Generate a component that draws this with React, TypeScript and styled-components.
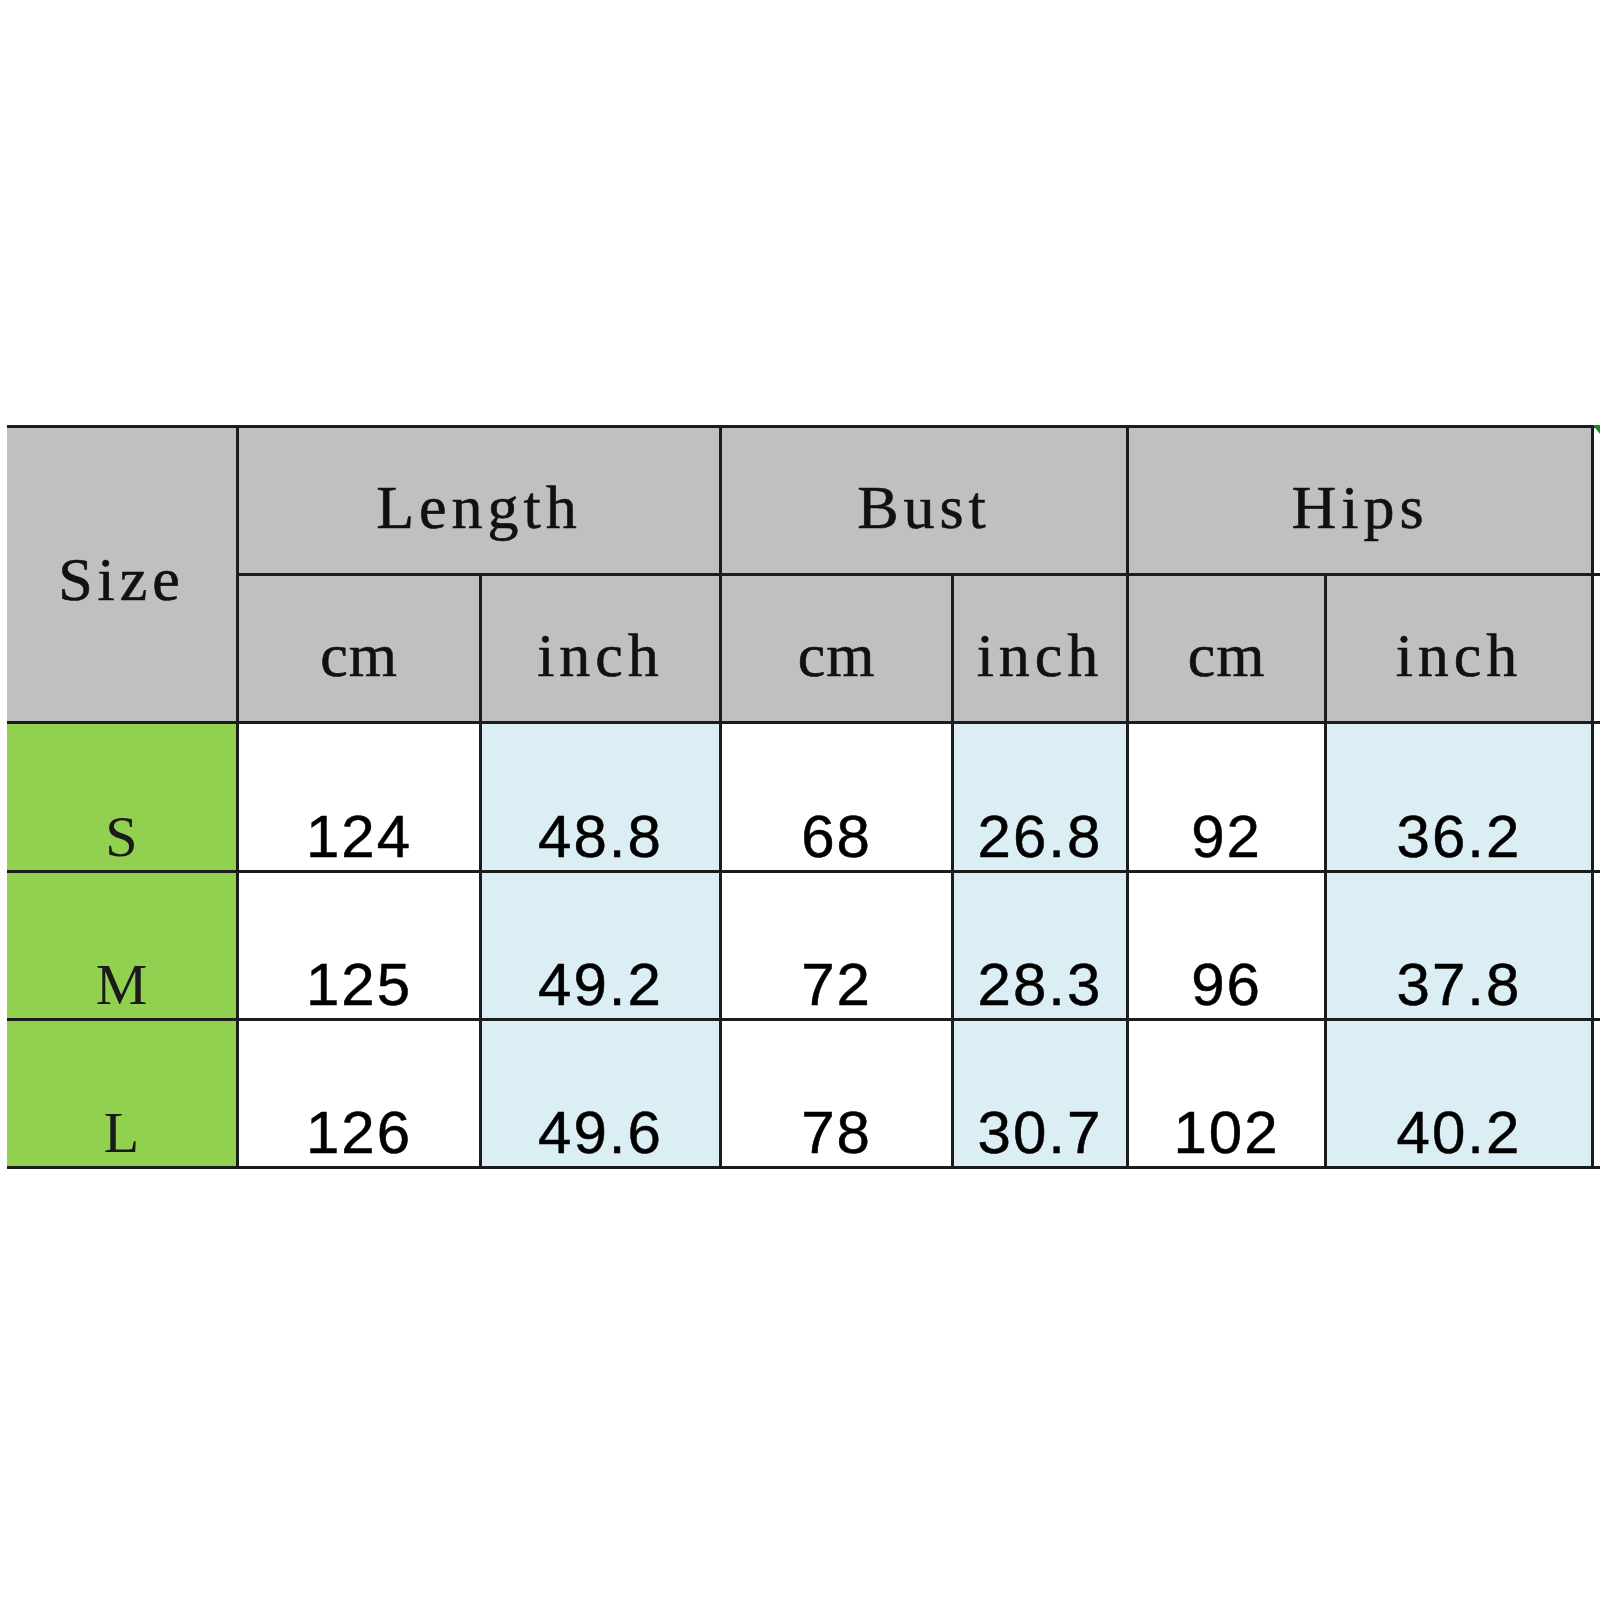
import React from "react";
import styled, { createGlobalStyle } from "styled-components";

const Global = createGlobalStyle`
  html, body { margin: 0; padding: 0; background: #ffffff; }
  body { width: 1600px; height: 1600px; overflow: hidden; }
`;

const Page = styled.div`
  width: 1600px;
  height: 1600px;
  box-sizing: border-box;
  padding: 425px 0 0 7px;
  background: #ffffff;
`;

const Grid = styled.div`
  position: relative;
  display: grid;
  grid-template-columns: 229px 240px 237px 229px 172px 195px 264px 6px;
  grid-template-rows: 145px 145px 146px 145px 145px;
  gap: 3px;
  padding: 3px 0;
  background: #1c1c1c;
  width: 1593px;
  box-sizing: border-box;
`;

type Tone = "gray" | "green" | "white" | "blue";
const tones: Record<Tone, string> = {
  gray: "#c0c0c0",
  green: "#92d050",
  white: "#ffffff",
  blue: "#daeef3",
};

const Cell = styled.div<{
  $tone: Tone;
  $col: string;
  $row: string;
}>`
  grid-column: ${(p) => p.$col};
  grid-row: ${(p) => p.$row};
  background: ${(p) => tones[p.$tone]};
  display: flex;
  justify-content: center;
  min-width: 0;
  overflow: hidden;
`;

const HeadCell = styled(Cell)`
  align-items: center;
  padding-top: ${(p) => (p.$row === "1 / span 2" ? "8px" : "12px")};
  box-sizing: border-box;
`;

const BodyCell = styled(Cell)`
  align-items: flex-end;
  padding-bottom: 2px;
  box-sizing: border-box;
`;

const HeadText = styled.span<{ $tight?: boolean }>`
  font-family: "Liberation Serif", "DejaVu Serif", serif;
  font-size: 62px;
  letter-spacing: ${(p) => (p.$tight ? "1px" : "5px")};
  color: #111111;
  line-height: 1;
  -webkit-text-stroke: 0.6px #111111;
`;

const SizeText = styled.span`
  font-family: "Liberation Serif", "DejaVu Serif", serif;
  font-size: 58px;
  color: #1a1a1a;
  line-height: 1;
  padding-bottom: 2px;
`;

const NumText = styled.span`
  font-family: "Liberation Sans", Arial, sans-serif;
  font-size: 60px;
  letter-spacing: 2px;
  color: #000000;
  line-height: 1;
  padding-bottom: 1px;
  -webkit-text-stroke: 0.5px #000000;
`;

const Marker = styled.div`
  position: absolute;
  top: 0;
  right: 0;
  width: 0;
  height: 0;
  border-top: 9px solid #1a8a1a;
  border-left: 7px solid transparent;
`;

const rows = [
  { size: "S", v: ["124", "48.8", "68", "26.8", "92", "36.2"] },
  { size: "M", v: ["125", "49.2", "72", "28.3", "96", "37.8"] },
  { size: "L", v: ["126", "49.6", "78", "30.7", "102", "40.2"] },
];

export default function App() {
  return (
    <>
      <Global />
      <Page>
        <Grid>
          <HeadCell $tone="gray" $col="1" $row="1 / span 2">
            <HeadText>Size</HeadText>
          </HeadCell>
          <HeadCell $tone="gray" $col="2 / span 2" $row="1">
            <HeadText>Length</HeadText>
          </HeadCell>
          <HeadCell $tone="gray" $col="4 / span 2" $row="1">
            <HeadText>Bust</HeadText>
          </HeadCell>
          <HeadCell $tone="gray" $col="6 / span 2" $row="1">
            <HeadText>Hips</HeadText>
          </HeadCell>
          <Cell $tone="white" $col="8" $row="1" />
          {["cm", "inch", "cm", "inch", "cm", "inch"].map((t, i) => (
            <HeadCell key={i} $tone="gray" $col={String(i + 2)} $row="2">
              <HeadText $tight={t === "cm"}>{t}</HeadText>
            </HeadCell>
          ))}
          <Cell $tone="white" $col="8" $row="2" />
          {rows.map((r, ri) => (
            <React.Fragment key={r.size}>
              <BodyCell $tone="green" $col="1" $row={String(ri + 3)}>
                <SizeText>{r.size}</SizeText>
              </BodyCell>
              {r.v.map((v, ci) => (
                <BodyCell
                  key={ci}
                  $tone={ci % 2 === 1 ? "blue" : "white"}
                  $col={String(ci + 2)}
                  $row={String(ri + 3)}
                >
                  <NumText>{v}</NumText>
                </BodyCell>
              ))}
              <Cell $tone="white" $col="8" $row={String(ri + 3)} />
            </React.Fragment>
          ))}
          <Marker />
        </Grid>
      </Page>
    </>
  );
}
